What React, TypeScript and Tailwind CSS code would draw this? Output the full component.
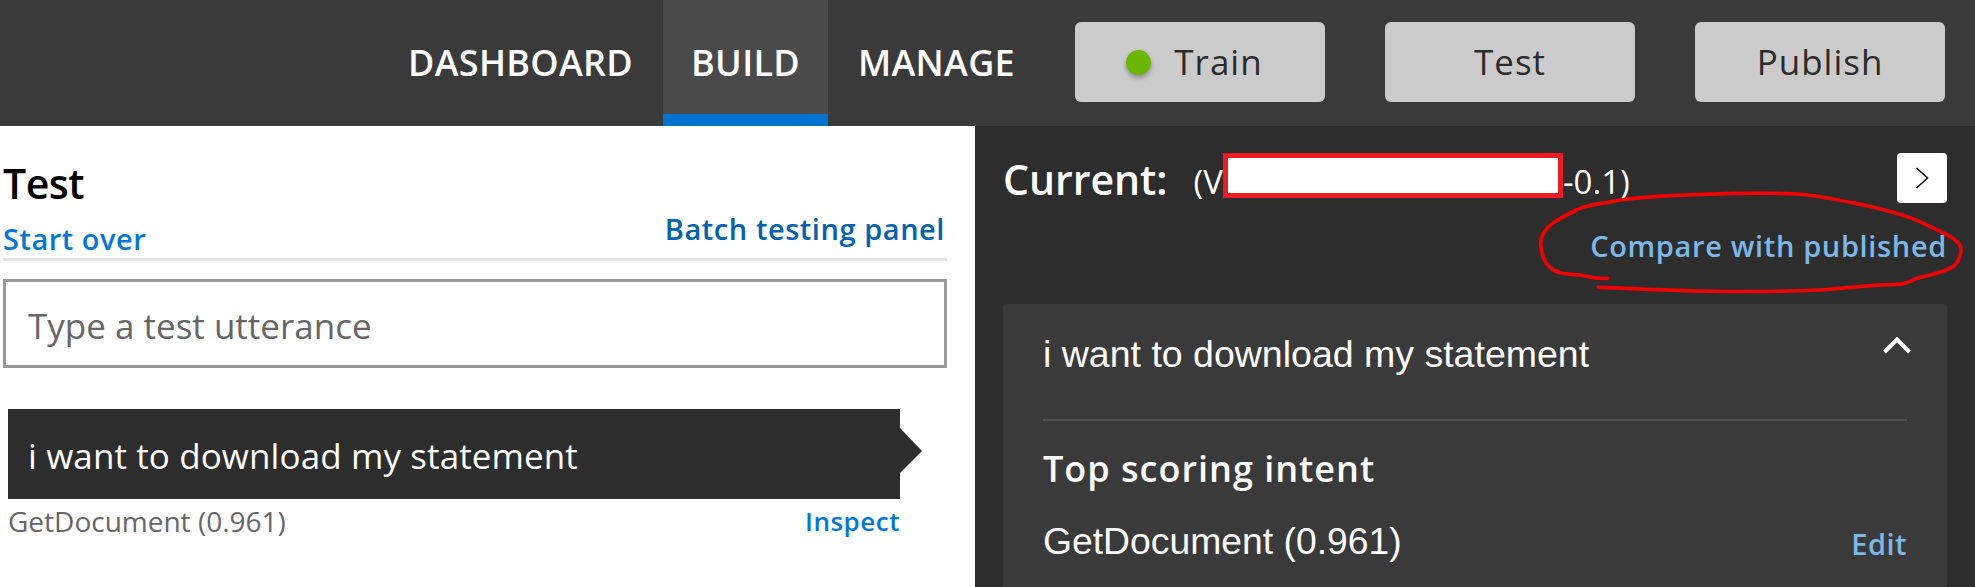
const NavItem = ({ label, active }: { label: string; active?: boolean }) => (
  <div
    className={`h-[126px] pt-[12px] flex items-center justify-center border-b-[12px] text-[36px] tracking-[0.3px] font-semibold text-white ${
      active ? "w-[165px] bg-[#4a4a4a] border-[#0072d0]" : "px-[30px] border-transparent"
    }`}
  >
    {label}
  </div>
);

const HeaderButton = ({ label, dot }: { label: string; dot?: boolean }) => (
  <button
    className={`w-[250px] h-[80px] mt-[22px] rounded-[6px] bg-[#cbcbcb] flex items-center justify-center gap-[23px] text-[35px] tracking-[1px] text-[#2b2b2b] ${
      dot ? "pr-[11px]" : ""
    }`}
  >
    {dot && (
      <span className="w-[25px] h-[25px] rounded-full bg-[#6cb700] shadow-[0_3px_5px_rgba(0,0,0,0.3)]" />
    )}
    {label}
  </button>
);

export default function App() {
  return (
    <div className="w-[1975px] h-[587px] overflow-hidden relative font-['Open_Sans',sans-serif]">
      {/* Top bar */}
      <header className="h-[126px] bg-[#3a3a3a] flex justify-end pr-[30px]">
        <nav className="flex mr-[30px]">
          <NavItem label="DASHBOARD" />
          <NavItem label="BUILD" active />
          <NavItem label="MANAGE" />
        </nav>
        <div className="flex gap-[60px]">
          <HeaderButton label="Train" dot />
          <HeaderButton label="Test" />
          <HeaderButton label="Publish" />
        </div>
      </header>

      <main className="flex h-[461px]">
        {/* Test panel */}
        <section className="w-[975px] bg-white pl-[3px] pt-[32px]">
          <div className="w-[944px]">
            <h1 className="text-[41px] leading-[50px] font-semibold tracking-[-0.5px] text-black">Test</h1>
            <div className="flex justify-between items-end h-[53px] border-b-[3px] border-[#e5e5e5]">
              <a className="text-[29px] leading-[38px] font-semibold tracking-[0.5px] text-[#0078d7]">Start over</a>
              <a className="text-[29px] leading-[38px] font-semibold tracking-[0.55px] text-[#0063b1] mb-[10px] mr-[2px]">Batch testing panel</a>
            </div>
            <div className="mt-[18px] h-[89px] pt-[6px] border-[3px] border-[#999999] flex items-center pl-[22px] text-[35px] text-[#666666]">
              Type a test utterance
            </div>
          </div>

          <div className="ml-[5px] w-[914px] mt-[41px]">
            <div className="relative w-[892px] h-[90px] pt-[4px] bg-[#2d2d2d] flex items-center pl-[20px] text-[35px] tracking-[0.1px] text-white">
              i want to download my statement
              <svg className="absolute left-[892px] top-[19px]" width="22" height="45" viewBox="0 0 22 45">
                <path d="M0 0 L22 23 L0 45 Z" fill="#2d2d2d" />
              </svg>
            </div>
            <div className="w-[892px] flex justify-between items-center h-[44px]">
              <span className="text-[28px] text-[#666666]">GetDocument (0.961)</span>
              <a className="text-[26px] font-semibold tracking-[0.5px] text-[#0078d7]">Inspect</a>
            </div>
          </div>
        </section>

        {/* Result panel */}
        <section className="flex-1 bg-[#2d2d2d] pl-[28px] pr-[28px] pt-[27px]">
          <div className="flex justify-between h-[50px]">
            <div className="flex items-center h-[45px] text-white">
              <span className="text-[41px] font-semibold mr-[26px] mt-[8px]">Current:</span>
              <span className="text-[33px] mt-[13px]">(V</span>
              <span className="w-[340px] h-[45px] bg-white border-[5px] border-[#ed1c24]" />
              <span className="text-[33px] mt-[13px]">-0.1)</span>
            </div>
            <button className="w-[50px] h-[50px] bg-white rounded-[4px] flex items-center justify-center">
              <svg width="14" height="24" viewBox="0 0 14 24" fill="none" stroke="#111" strokeWidth="1.6">
                <path d="M1.5 2 L12.5 12 L1.5 22" />
              </svg>
            </button>
          </div>
          <div className="flex justify-end h-[64px] items-end">
            <a className="text-[29px] font-semibold tracking-[0.65px] text-[#7cb8e8]">Compare with published</a>
          </div>

          <div className="mt-[37px] h-[283px] bg-[#3a3a3a] rounded-t-[3px] px-[40px] pt-[30px] font-['Liberation_Sans',sans-serif] text-white">
            <div className="flex justify-between h-[85px]">
              <span className="text-[37.5px] leading-[40px]">i want to download my statement</span>
              <svg className="mt-[3px] -mr-[4px]" width="28" height="17" viewBox="0 0 28 17" fill="none" stroke="#fff" strokeWidth="4">
                <path d="M1.5 15 L14 2.5 L26.5 15" />
              </svg>
            </div>
            <div className="border-t-2 border-[#505050]" />
            <h2 className="mt-[26px] text-[36px] leading-[44px] font-semibold tracking-[1px] font-['Open_Sans',sans-serif]">Top scoring intent</h2>
            <div className="mt-[25px] flex justify-between items-center">
              <span className="text-[37.3px] leading-[44px]">GetDocument (0.961)</span>
              <a className="mt-[6px] text-[29px] font-semibold tracking-[0.5px] text-[#7cb8e8] font-['Open_Sans',sans-serif]">Edit</a>
            </div>
            <div className="mt-[25px] border-t-2 border-[#505050]" />
          </div>
        </section>
      </main>

      {/* Hand-drawn annotation */}
      <svg
        className="absolute left-[1530px] top-[180px]"
        width="445"
        height="120"
        viewBox="0 0 1335 360"
        fill="none"
        stroke="#f00000"
        strokeWidth="11"
        strokeLinecap="round"
        strokeLinejoin="round"
      >
        <path d="M233 295 C200 298 175 290 150 285 C120 282 85 285 60 262 C42 245 33 220 32 190 C33 165 50 140 75 125 C95 112 120 100 140 90 C170 72 230 70 270 60 C340 50 450 45 520 43 C600 40 730 38 800 42 C860 45 950 65 1000 75 C1060 88 1130 105 1180 130 C1215 148 1275 170 1290 195 C1298 215 1288 245 1270 260 C1240 278 1200 285 1160 295 C1140 305 1125 313 1090 314 C1040 312 960 325 860 330 C780 335 620 335 500 333 C400 331 300 325 205 322" />
      </svg>
    </div>
  );
}
